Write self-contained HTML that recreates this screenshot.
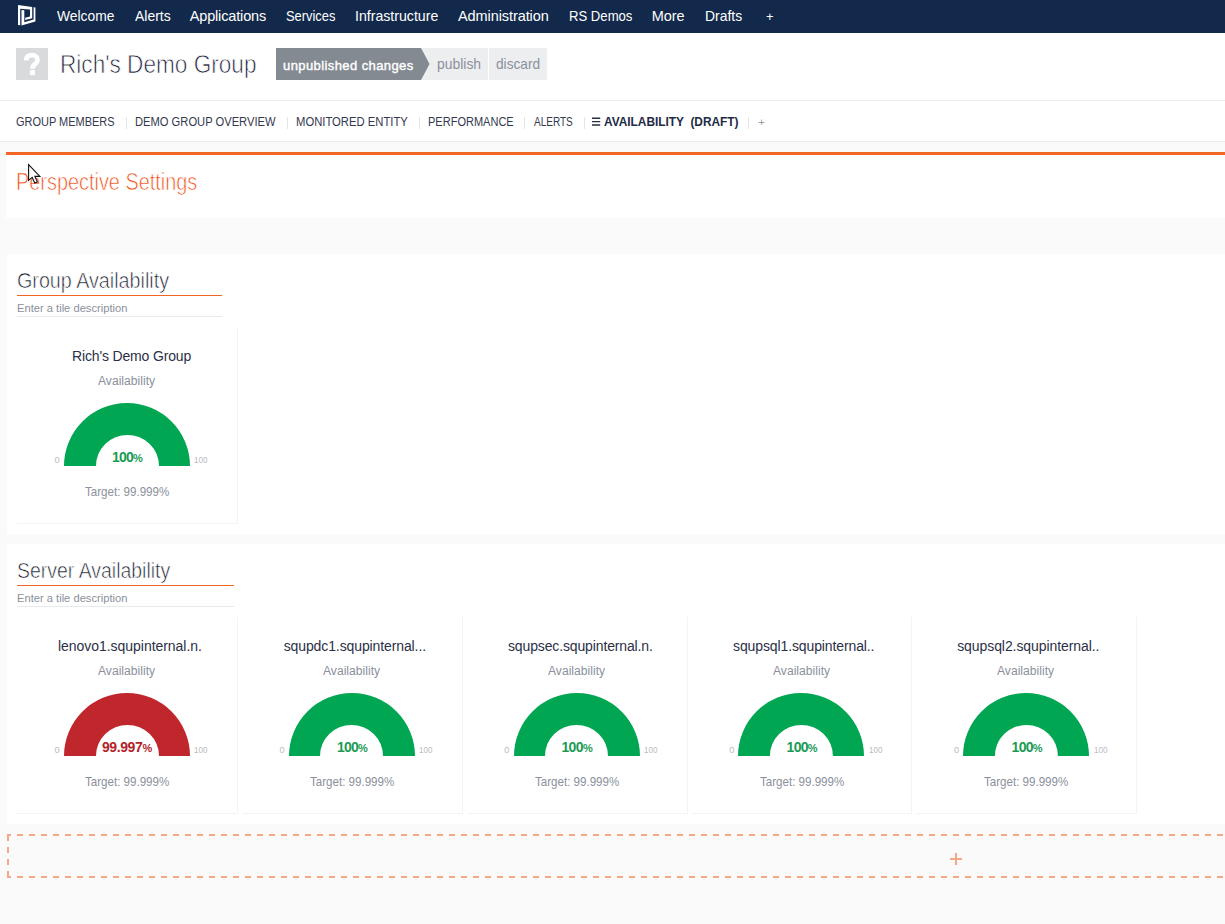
<!DOCTYPE html>
<html lang="en"><head><meta charset="utf-8"><title>Rich's Demo Group - Availability (Draft)</title>
<style>
html,body{margin:0;padding:0}
body{width:1225px;height:924px;overflow:hidden;position:relative;background:#fafafa;font-family:"Liberation Sans",sans-serif}
.t{position:absolute;transform-origin:0 0;white-space:pre;line-height:1;margin:0;padding:0;font-weight:400;text-decoration:none;display:block}
#topnav{position:absolute;left:0;top:0;width:1225px;height:33px;background:#13294b}
#head{position:absolute;left:0;top:33px;width:1225px;height:67px;background:#fff;border-bottom:1px solid #e9ebec}
#tabs{position:absolute;left:0;top:101px;width:1225px;height:40px;background:#fff;border-bottom:1px solid #e9ebec}
.sep{position:absolute;top:117px;width:1px;height:12px;background:#e2e7e4}
.panel{position:absolute;background:#fff;margin:0}
nav,header,main,section,article,.tabs{display:block;margin:0;padding:0}
.box{position:absolute}
.tile{position:absolute;width:220px;height:196px;border-right:1px solid #f3f3f6;border-bottom:1px solid #f3f3f6;background:#fff}
.g{position:absolute;display:block}
.v{font-size:14px;font-weight:700}
.v small{font-size:11px;font-weight:700}
.ul{position:absolute;height:1px}

</style></head><body>
<nav>
<div class="bg" id="topnav"></div>
<svg class="g" style="left:17px;top:4px" width="20" height="23" viewBox="17 4 20 23"><g fill="#fff"><path d="M18 5L32.2 7V18.2L25.2 20V17.7L30 16.4V9.6L20.2 8.7V25.3L18 24.9Z"/><path d="M21.5 10L24.3 10.3V22.2L33.6 19.6V7.2L35.4 7.4V21.6L21.5 25.6Z"/></g></svg>
<a class="t" style="left:57.00px;top:8.80px;font-size:14.5px;color:#ffffff;transform:scaleX(0.9534);">Welcome</a>
<a class="t" style="left:134.50px;top:8.80px;font-size:14.5px;color:#ffffff;transform:scaleX(0.9643);">Alerts</a>
<a class="t" style="left:189.70px;top:8.80px;font-size:14.5px;color:#ffffff;letter-spacing:-0.149px;">Applications</a>
<a class="t" style="left:286.00px;top:8.80px;font-size:14.5px;color:#ffffff;transform:scaleX(0.8889);">Services</a>
<a class="t" style="left:354.53px;top:8.80px;font-size:14.5px;color:#ffffff;transform:scaleX(0.9744);">Infrastructure</a>
<a class="t" style="left:458.00px;top:8.80px;font-size:14.5px;color:#ffffff;letter-spacing:-0.085px;">Administration</a>
<a class="t" style="left:568.80px;top:8.80px;font-size:14.5px;color:#ffffff;transform:scaleX(0.9049);">RS Demos</a>
<a class="t" style="left:651.70px;top:8.80px;font-size:14.5px;color:#ffffff;letter-spacing:-0.024px;">More</a>
<a class="t" style="left:704.84px;top:8.80px;font-size:14.5px;color:#ffffff;transform:scaleX(0.9593);">Drafts</a>
<a class="t" style="left:766.00px;top:9.80px;font-size:13px;color:#ffffff;">+</a>
</nav>
<header>
<div class="bg" id="head"></div>
<div class="box" style="left:16px;top:48px;width:32px;height:32px;background:#d9dadc"></div>
<svg class="g" style="left:16px;top:48px" width="32" height="32" viewBox="16 48 32 32" role="img" aria-label="unknown"><path d="M26.1 60.3C26.3 57 28.6 55.2 32 55.2C35.4 55.2 37.5 57.2 37.5 59.9C37.5 64.3 32.45 63.6 32.45 68.8" stroke="#fff" stroke-width="4.7" fill="none"/><rect x="30" y="70.1" width="4.9" height="5" fill="#fff"/></svg>
<h1 class="t" style="left:59.98px;top:51.80px;font-size:25.5px;color:#1b2035;transform:scaleX(0.8863);-webkit-text-stroke:0.75px #fff;">Rich's Demo Group</h1>
<div class="box" style="left:400px;top:48px;width:88px;height:32px;background:#eceeef"></div>
<div class="box" style="left:489px;top:48px;width:58px;height:32px;background:#eceeef"></div>
<svg class="g" style="left:276px;top:48px" width="154" height="32" viewBox="0 0 154 32"><path d="M0 0H145L153.5 16L145 32H0Z" fill="#838a92"/></svg>
<span class="t" style="left:283.00px;top:59.00px;font-size:13px;color:#ffffff;letter-spacing:0.410px;-webkit-text-stroke:0.4px #fff;">unpublished changes</span>
<span class="t" style="left:436.50px;top:57.40px;font-size:14.5px;color:#8b909c;transform:scaleX(0.9589);">publish</span>
<span class="t" style="left:496.00px;top:57.40px;font-size:14.5px;color:#8b909c;transform:scaleX(0.9426);">discard</span>
</header>
<div class="tabs">
<div class="bg" id="tabs"></div>
<a class="t" style="left:16.00px;top:116.00px;font-size:12.5px;color:#33384f;transform:scaleX(0.8781);">GROUP MEMBERS</a>
<a class="t" style="left:134.61px;top:116.00px;font-size:12.5px;color:#33384f;transform:scaleX(0.8938);">DEMO GROUP OVERVIEW</a>
<a class="t" style="left:295.60px;top:116.00px;font-size:12.5px;color:#33384f;transform:scaleX(0.9011);">MONITORED ENTITY</a>
<a class="t" style="left:427.62px;top:116.00px;font-size:12.5px;color:#33384f;transform:scaleX(0.8812);">PERFORMANCE</a>
<a class="t" style="left:533.50px;top:116.00px;font-size:12.5px;color:#33384f;transform:scaleX(0.8010);">ALERTS</a>
<i class="sep" style="left:126px"></i>
<i class="sep" style="left:287px"></i>
<i class="sep" style="left:419px"></i>
<i class="sep" style="left:524px"></i>
<i class="sep" style="left:584px"></i>
<i class="sep" style="left:748px"></i>
<svg class="g" style="left:591px;top:116px" width="10" height="11" viewBox="0 0 10 11"><path d="M1 2.2h8.2M1 5.6h8.2M1 9h8.2" stroke="#2a2f45" stroke-width="1.4" fill="none"/></svg>
<a class="t" style="left:603.60px;top:116.00px;font-size:12.5px;color:#1d2a45;transform:scaleX(0.9498);font-weight:700;">AVAILABILITY  (DRAFT)</a>
<a class="t" style="left:758.25px;top:117.00px;font-size:11px;color:#9a9a9a;">+</a>
</div>
<main>
<section>
<div class="panel" style="left:6px;top:152px;width:1219px;height:63px;border-top:3px solid #f26522"></div>
<h2 class="t" style="left:16.35px;top:171.00px;font-size:23.5px;color:#f04a10;transform:scaleX(0.8462);-webkit-text-stroke:0.7px #fff;">Perspective Settings</h2>
</section>
<section>
<div class="panel" style="left:7px;top:254px;width:1218px;height:280px"></div>
<h3 class="t" style="left:16.90px;top:269.50px;font-size:22px;color:#161a2d;transform:scaleX(0.8964);-webkit-text-stroke:0.65px #fff;">Group Availability</h3>
<i class="ul" style="left:17px;top:295px;width:205px;background:#f26522"></i>
<span class="t" style="left:17.00px;top:303.00px;font-size:11.5px;color:#8b909c;transform:scaleX(0.9701);">Enter a tile description</span>
<i class="ul" style="left:17px;top:316px;width:205px;background:#e6eaec"></i>
<article>
<div class="tile" style="left:17px;top:327px"></div>
<span class="t" style="left:72.00px;top:349.25px;font-size:14px;color:#2b3047;letter-spacing:-0.152px;">Rich's Demo Group</span>
<span class="t" style="left:98.00px;top:375.00px;font-size:12.5px;color:#8b909c;transform:scaleX(0.9702);">Availability</span>
<svg class="g" style="left:64px;top:403px" width="126" height="63" viewBox="0 0 126 63"><path d="M0 63A63 63 0 0 1 126 63H95.0A31.5 31.1 0 0 0 32.0 63Z" fill="#00a651"/></svg>
<span class="t" style="left:54.60px;top:456.00px;font-size:9.2px;color:#b9bac1;">0</span>
<span class="t" style="left:194.10px;top:456.00px;font-size:9.2px;color:#b9bac1;transform:scaleX(0.8739);">100</span>
<span class="t v" style="left:112.00px;top:450.00px;color:#1a9b55;letter-spacing:-0.786px">100<small>%</small></span>
<span class="t" style="left:85.00px;top:485.00px;font-size:13.5px;color:#8b909c;transform:scaleX(0.8570);">Target: 99.999%</span>
</article>
</section>
<section>
<div class="panel" style="left:7px;top:544px;width:1218px;height:280px"></div>
<h3 class="t" style="left:16.92px;top:559.50px;font-size:22px;color:#161a2d;transform:scaleX(0.8844);-webkit-text-stroke:0.65px #fff;">Server Availability</h3>
<i class="ul" style="left:17px;top:585px;width:217px;background:#f26522"></i>
<span class="t" style="left:17.00px;top:593.00px;font-size:11.5px;color:#8b909c;transform:scaleX(0.9701);">Enter a tile description</span>
<i class="ul" style="left:17px;top:606px;width:217px;background:#e6eaec"></i>
<article>
<div class="tile" style="left:17px;top:617px"></div>
<span class="t" style="left:58.00px;top:639.25px;font-size:14px;color:#2b3047;letter-spacing:-0.040px;">lenovo1.squpinternal.n.</span>
<span class="t" style="left:98.00px;top:665.00px;font-size:12.5px;color:#8b909c;transform:scaleX(0.9702);">Availability</span>
<svg class="g" style="left:64px;top:693px" width="126" height="63" viewBox="0 0 126 63"><path d="M0 63A63 63 0 0 1 126 63H95.0A31.5 31.1 0 0 0 32.0 63Z" fill="#bf272d"/></svg>
<span class="t" style="left:54.60px;top:746.00px;font-size:9.2px;color:#b9bac1;">0</span>
<span class="t" style="left:194.10px;top:746.00px;font-size:9.2px;color:#b9bac1;transform:scaleX(0.8739);">100</span>
<span class="t v" style="left:101.90px;top:740.00px;color:#b3242a;letter-spacing:-0.387px">99.997<small>%</small></span>
<span class="t" style="left:85.00px;top:775.00px;font-size:13.5px;color:#8b909c;transform:scaleX(0.8570);">Target: 99.999%</span>
</article>
<article>
<div class="tile" style="left:242px;top:617px"></div>
<span class="t" style="left:283.70px;top:639.25px;font-size:14px;color:#2b3047;letter-spacing:-0.108px;">squpdc1.squpinternal...</span>
<span class="t" style="left:322.85px;top:665.00px;font-size:12.5px;color:#8b909c;transform:scaleX(0.9702);">Availability</span>
<svg class="g" style="left:289px;top:693px" width="126" height="63" viewBox="0 0 126 63"><path d="M0 63A63 63 0 0 1 126 63H94.0A31.5 31.1 0 0 0 31.0 63Z" fill="#00a651"/></svg>
<span class="t" style="left:279.45px;top:746.00px;font-size:9.2px;color:#b9bac1;">0</span>
<span class="t" style="left:418.95px;top:746.00px;font-size:9.2px;color:#b9bac1;transform:scaleX(0.8739);">100</span>
<span class="t v" style="left:336.90px;top:740.00px;color:#1a9b55;letter-spacing:-0.753px">100<small>%</small></span>
<span class="t" style="left:309.85px;top:775.00px;font-size:13.5px;color:#8b909c;transform:scaleX(0.8570);">Target: 99.999%</span>
</article>
<article>
<div class="tile" style="left:467px;top:617px"></div>
<span class="t" style="left:508.00px;top:639.25px;font-size:14px;color:#2b3047;letter-spacing:-0.136px;">squpsec.squpinternal.n.</span>
<span class="t" style="left:547.70px;top:665.00px;font-size:12.5px;color:#8b909c;transform:scaleX(0.9702);">Availability</span>
<svg class="g" style="left:514px;top:693px" width="126" height="63" viewBox="0 0 126 63"><path d="M0 63A63 63 0 0 1 126 63H94.0A31.5 31.1 0 0 0 31.0 63Z" fill="#00a651"/></svg>
<span class="t" style="left:504.30px;top:746.00px;font-size:9.2px;color:#b9bac1;">0</span>
<span class="t" style="left:643.80px;top:746.00px;font-size:9.2px;color:#b9bac1;transform:scaleX(0.8739);">100</span>
<span class="t v" style="left:561.40px;top:740.00px;color:#1a9b55;letter-spacing:-0.586px">100<small>%</small></span>
<span class="t" style="left:534.70px;top:775.00px;font-size:13.5px;color:#8b909c;transform:scaleX(0.8570);">Target: 99.999%</span>
</article>
<article>
<div class="tile" style="left:691px;top:617px"></div>
<span class="t" style="left:733.00px;top:639.25px;font-size:14px;color:#2b3047;letter-spacing:-0.113px;">squpsql1.squpinternal..</span>
<span class="t" style="left:772.55px;top:665.00px;font-size:12.5px;color:#8b909c;transform:scaleX(0.9702);">Availability</span>
<svg class="g" style="left:738px;top:693px" width="126" height="63" viewBox="0 0 126 63"><path d="M0 63A63 63 0 0 1 126 63H94.9A31.5 31.1 0 0 0 31.9 63Z" fill="#00a651"/></svg>
<span class="t" style="left:729.15px;top:746.00px;font-size:9.2px;color:#b9bac1;">0</span>
<span class="t" style="left:868.65px;top:746.00px;font-size:9.2px;color:#b9bac1;transform:scaleX(0.8739);">100</span>
<span class="t v" style="left:786.60px;top:740.00px;color:#1a9b55;letter-spacing:-0.753px">100<small>%</small></span>
<span class="t" style="left:759.55px;top:775.00px;font-size:13.5px;color:#8b909c;transform:scaleX(0.8570);">Target: 99.999%</span>
</article>
<article>
<div class="tile" style="left:916px;top:617px"></div>
<span class="t" style="left:957.20px;top:639.25px;font-size:14px;color:#2b3047;letter-spacing:-0.077px;">squpsql2.squpinternal..</span>
<span class="t" style="left:997.40px;top:665.00px;font-size:12.5px;color:#8b909c;transform:scaleX(0.9702);">Availability</span>
<svg class="g" style="left:963px;top:693px" width="126" height="63" viewBox="0 0 126 63"><path d="M0 63A63 63 0 0 1 126 63H94.9A31.5 31.1 0 0 0 31.9 63Z" fill="#00a651"/></svg>
<span class="t" style="left:954.00px;top:746.00px;font-size:9.2px;color:#b9bac1;">0</span>
<span class="t" style="left:1093.50px;top:746.00px;font-size:9.2px;color:#b9bac1;transform:scaleX(0.8739);">100</span>
<span class="t v" style="left:1011.60px;top:740.00px;color:#1a9b55;letter-spacing:-0.753px">100<small>%</small></span>
<span class="t" style="left:984.40px;top:775.00px;font-size:13.5px;color:#8b909c;transform:scaleX(0.8570);">Target: 99.999%</span>
</article>
</section>
<section>
<svg class="g" style="left:7px;top:834px" width="1218" height="44" viewBox="7 834 1218 44"><g stroke="#f5a786" stroke-width="2" fill="none"><path d="M7 835H11M7 877H11M8 834V841M8 871V878"/><path d="M17 835H1300M17 877H1300M8 847V866" stroke-dasharray="6 6"/></g></svg>
<svg class="g" style="left:950px;top:853px" width="12" height="12" viewBox="0 0 12 12"><path d="M6 0v12M0 6h12" stroke="#f5a786" stroke-width="2" fill="none"/></svg>
</section>
</main>
<svg class="g" style="left:27px;top:163px" width="15" height="22" viewBox="27 163 15 22"><path d="M28.6 164.6V180.4L32.2 177.3L34.7 183L37.3 181.9L34.9 176.4H39.9Z" fill="#fff" stroke="#111" stroke-width="1.1" stroke-linejoin="miter"/></svg>
</body></html>
